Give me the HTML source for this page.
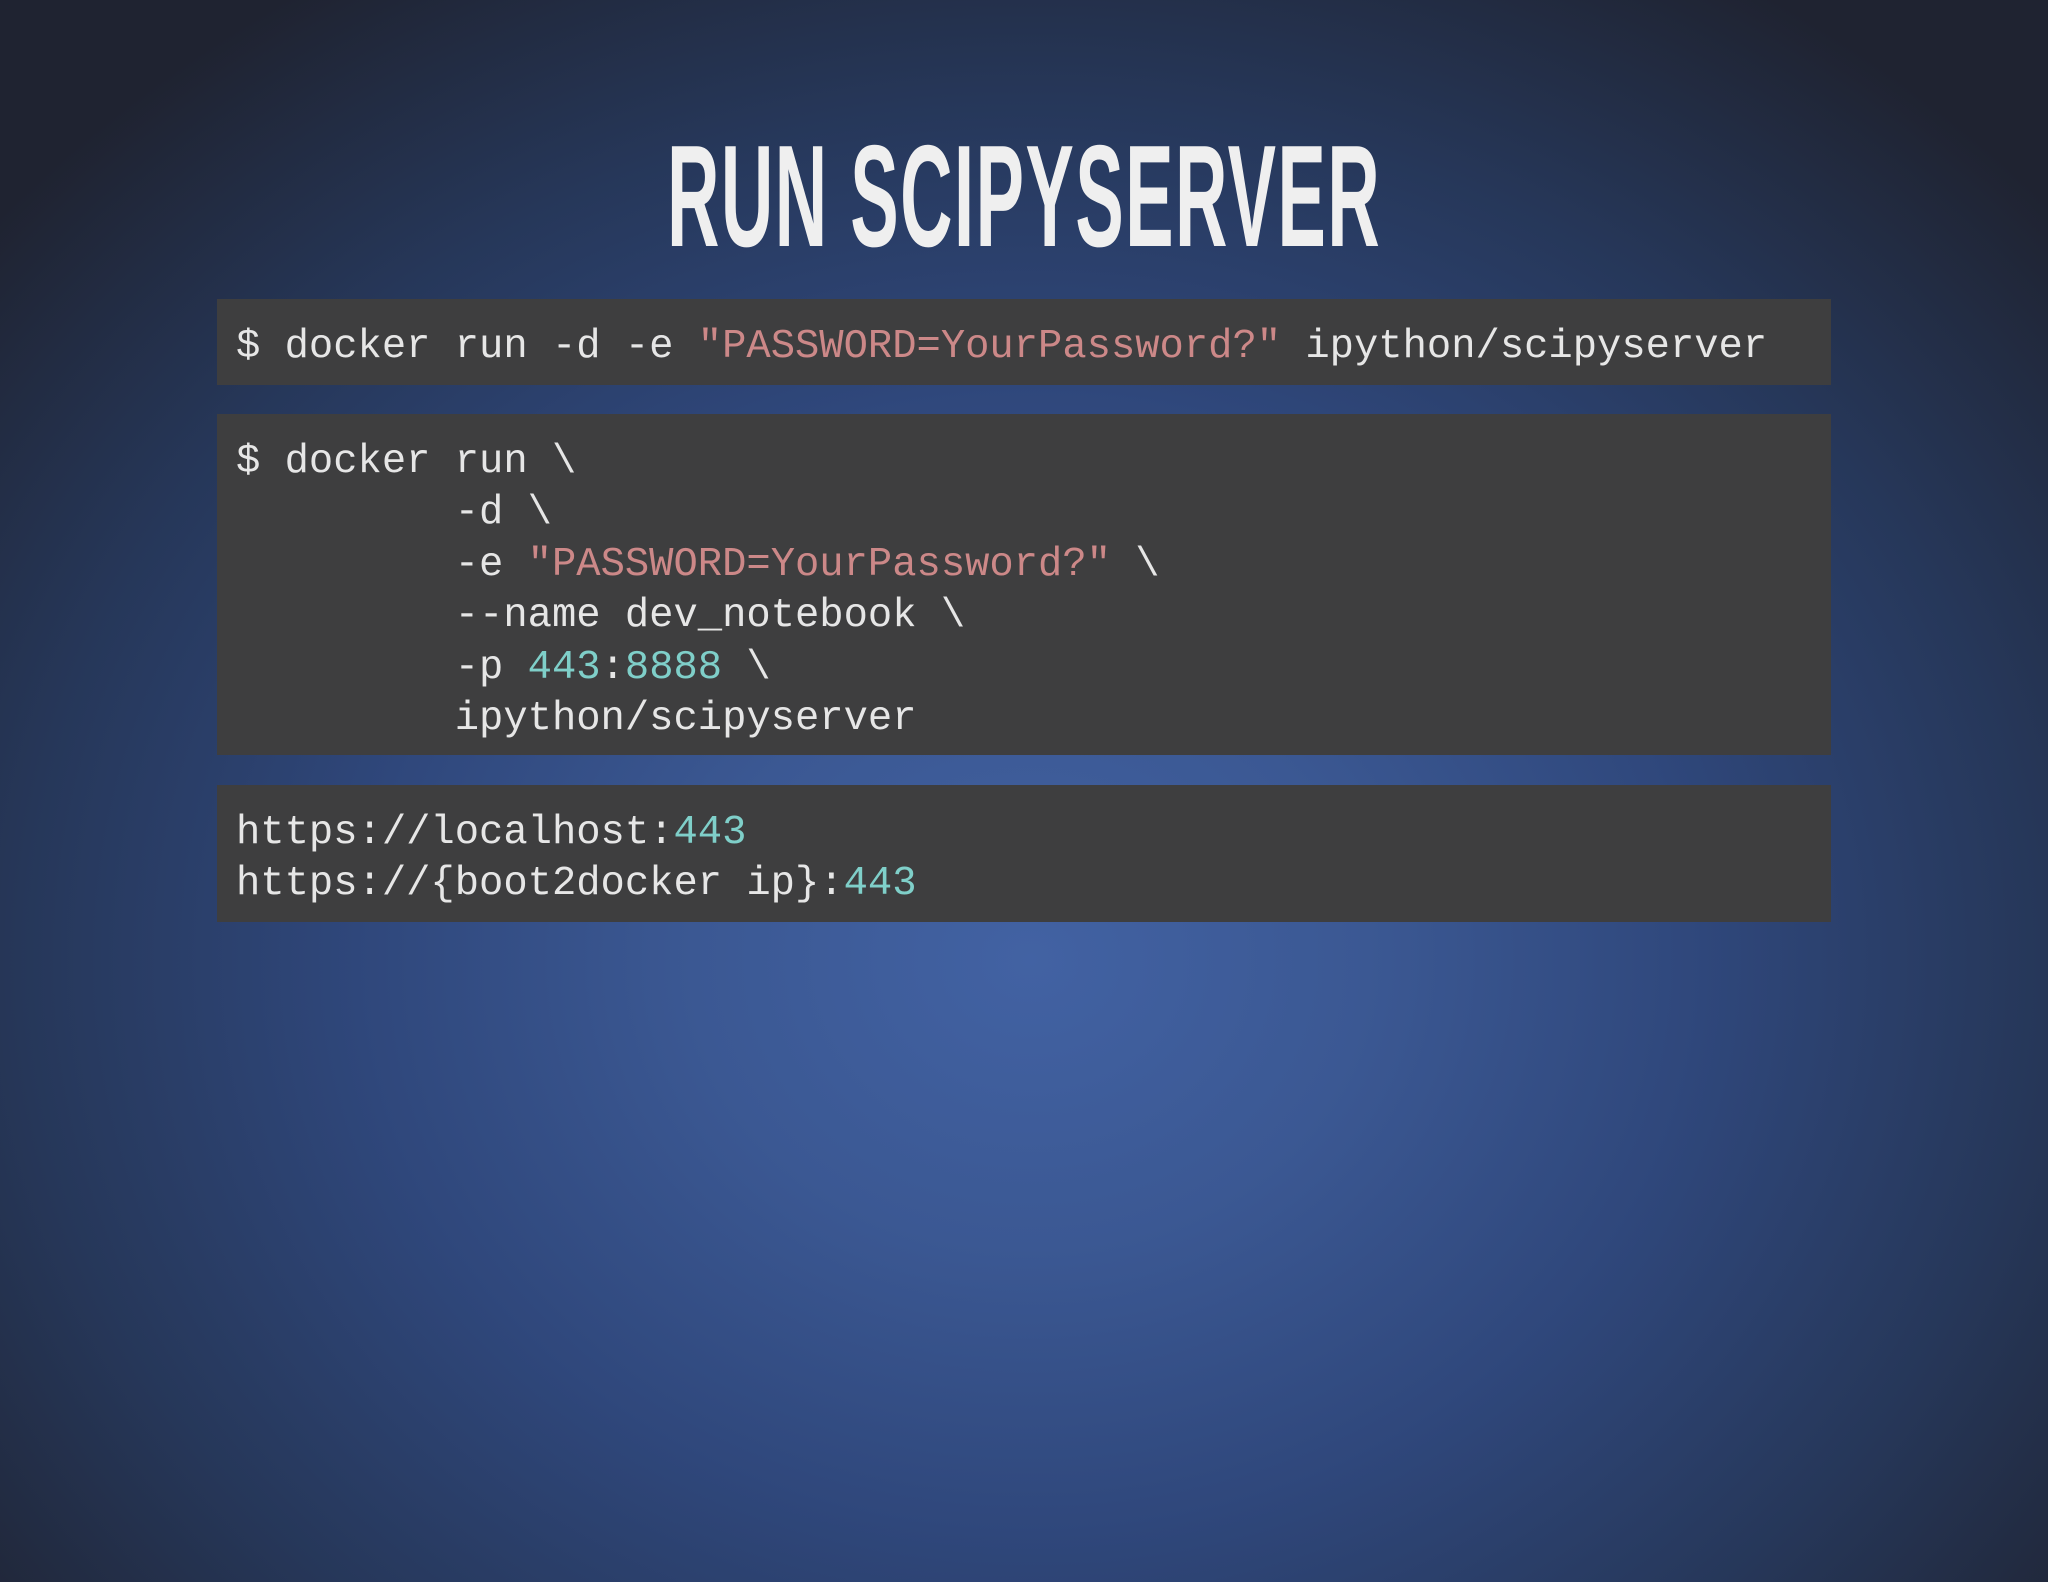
<!DOCTYPE html>
<html><head><meta charset="utf-8"><style>
html,body{margin:0;padding:0}
body{width:2048px;height:1582px;overflow:hidden;position:relative;
background:radial-gradient(ellipse 1350px 1150px at 1030px 960px,#4262a3 0%,#3b5893 25%,#2f477b 50%,#263759 75%,#1f2331 100%);}
.title{position:absolute;left:0;width:2048px;top:124px;text-align:center;font-family:"Liberation Sans",sans-serif;font-weight:bold;font-size:145px;line-height:145px;color:#efefef;white-space:nowrap}
.title span{display:inline-block;transform:scaleX(0.50);transform-origin:center;letter-spacing:3px}
.box{position:absolute;left:217px;width:1614px;background:#3e3e3f}
.code{position:absolute;left:236px;margin:0;font-family:"Liberation Mono",monospace;font-size:40.5px;line-height:51.4px;color:#e6e6e6;white-space:pre}
.s{color:#cc8888}.n{color:#7fcfc9}
</style></head><body>
<div class="title"><span>RUN SCIPYSERVER</span></div>
<div class="box" style="top:299px;height:86px"></div>
<div class="box" style="top:414px;height:341px"></div>
<div class="box" style="top:785px;height:137px"></div>
<pre class="code" style="top:322px">$ docker run -d -e <span class="s">"PASSWORD=YourPassword?"</span> ipython/scipyserver</pre>
<pre class="code" style="top:437px">$ docker run \
         -d \
         -e <span class="s">"PASSWORD=YourPassword?"</span> \
         --name dev_notebook \
         -p <span class="n">443</span>:<span class="n">8888</span> \
         ipython/scipyserver</pre>
<pre class="code" style="top:808px">https://localhost:<span class="n">443</span>
https://{boot2docker ip}:<span class="n">443</span></pre>
</body></html>
